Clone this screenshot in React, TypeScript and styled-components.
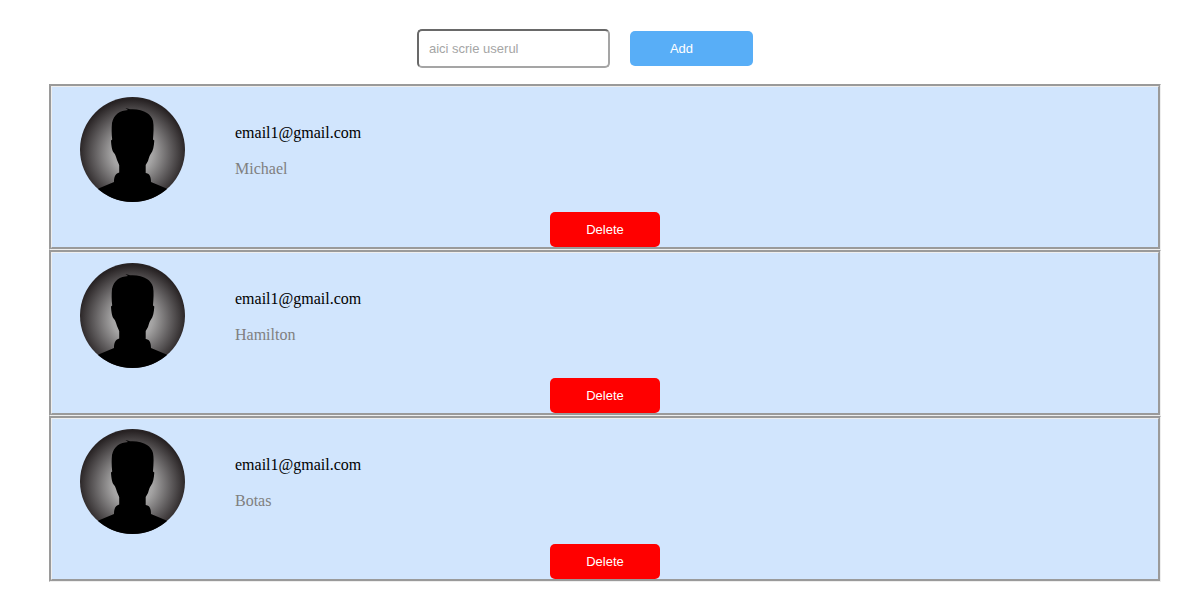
import React, { useState } from "react";
import styled, { createGlobalStyle } from "styled-components";

const GlobalStyle = createGlobalStyle`
  body {
    margin: 0;
    background: #fff;
    font-family: "Liberation Serif", "Times New Roman", serif;
    font-size: 16px;
  }
`;

const Page = styled.main`
  padding: 29px 39px 20px 49px;
`;

const AddForm = styled.form`
  display: flex;
  justify-content: center;
  align-items: center;
  gap: 20px;
  padding-right: 40px;
  margin-bottom: 16px;
`;

const UserInput = styled.input`
  box-sizing: border-box;
  width: 193px;
  height: 39px;
  padding: 10px;
  border: 2px solid;
  border-color: #696969 #a5a5a5 #a5a5a5 #696969;
  border-radius: 5px;
  background: #fff;
  font: 13px "Liberation Sans", Arial, sans-serif;

  &::placeholder {
    color: #a5a5a5;
    opacity: 1;
  }
`;

const Button = styled.button`
  height: 35px;
  border: 0;
  border-radius: 5px;
  color: #fff;
  font: 13px "Liberation Sans", Arial, sans-serif;
  cursor: pointer;
`;

const AddButton = styled(Button)`
  padding: 0 60px 0 40px;
  background: #58aef7;
`;

const DeleteButton = styled(Button)`
  padding: 0 36px;
  background: #f00;
`;

const UserList = styled.ul`
  list-style: none;
  margin: 0;
  padding: 0;
`;

const Card = styled.li`
  display: flex;
  flex-direction: column;
  align-items: center;
  gap: 10px;
  padding-top: 10px;
  border: 3px groove #eee;
  background: #d1e5fd;
`;

const Profile = styled.div`
  align-self: stretch;
  display: flex;
  gap: 50px;
  padding-left: 28px;
`;

const AvatarImage = styled.svg`
  display: block;
  flex: none;
  width: 105px;
  height: 105px;
  border-radius: 50%;
`;

const Details = styled.div`
  display: flex;
  flex-direction: column;
  gap: 18px;
  padding-top: 27px;
`;

const Line = styled.p<{ $muted?: boolean }>`
  margin: 0;
  line-height: 18px;
  color: ${(p) => (p.$muted ? "#808080" : "#000")};
`;

function Avatar({ id }: { id: string }) {
  return (
    <AvatarImage viewBox="0 0 105 105" aria-hidden="true">
      <defs>
        <radialGradient id={id} gradientUnits="userSpaceOnUse" cx="52.5" cy="56" r="54">
          <stop offset="0" stopColor="#c8c8c8" />
          <stop offset="0.38" stopColor="#a3a2a2" />
          <stop offset="0.7" stopColor="#625f60" />
          <stop offset="1" stopColor="#272223" />
        </radialGradient>
      </defs>
      <rect width="105" height="105" fill={`url(#${id})`} />
      <path d="M48 13 L45.500 11 L50 12.300 C56 11.800 63 13 67 16 C70 18 72 20.500 73 24 C74 29 73.500 36 73 42.500 L74.300 43.500 C74 49 73 54 71 56.500 C69.500 58 69 61 68 64 L65.700 68 L65.700 76 C69 76.500 71 78.500 71 85 L86.500 91.500 L95 105 H10 L18.500 91.500 L34 85 C34 78.500 36 76.500 39.200 75.500 L39.200 68 L37 63 C36 60 35.500 57.500 34 56 C32 54 31.300 49 31 43.500 L32.200 42.500 C31.500 37 31.500 31 32 26 C33 21.500 34.500 19 37.500 16.500 C40.500 14 44 13.500 48 13 Z" />
    </AvatarImage>
  );
}

interface User {
  id: number;
  email: string;
  name: string;
}

const initialUsers: User[] = [
  { id: 1, email: "email1@gmail.com", name: "Michael" },
  { id: 2, email: "email1@gmail.com", name: "Hamilton" },
  { id: 3, email: "email1@gmail.com", name: "Botas" },
];

export default function App() {
  const [users, setUsers] = useState(initialUsers);
  const [name, setName] = useState("");

  const addUser = (event: React.FormEvent) => {
    event.preventDefault();
    if (!name.trim()) return;
    setUsers([...users, { id: Date.now(), email: "email1@gmail.com", name }]);
    setName("");
  };

  return (
    <>
      <GlobalStyle />
      <Page>
        <AddForm onSubmit={addUser}>
          <UserInput
            type="text"
            aria-label="aici scrie userul"
            placeholder="aici scrie userul"
            value={name}
            onChange={(event) => setName(event.target.value)}
          />
          <AddButton type="submit">Add</AddButton>
        </AddForm>
        <UserList>
          {users.map((user) => (
            <Card key={user.id}>
              <Profile>
                <Avatar id={`glow-${user.id}`} />
                <Details>
                  <Line>{user.email}</Line>
                  <Line $muted>{user.name}</Line>
                </Details>
              </Profile>
              <DeleteButton
                type="button"
                onClick={() => setUsers(users.filter((u) => u.id !== user.id))}
              >
                Delete
              </DeleteButton>
            </Card>
          ))}
        </UserList>
      </Page>
    </>
  );
}
